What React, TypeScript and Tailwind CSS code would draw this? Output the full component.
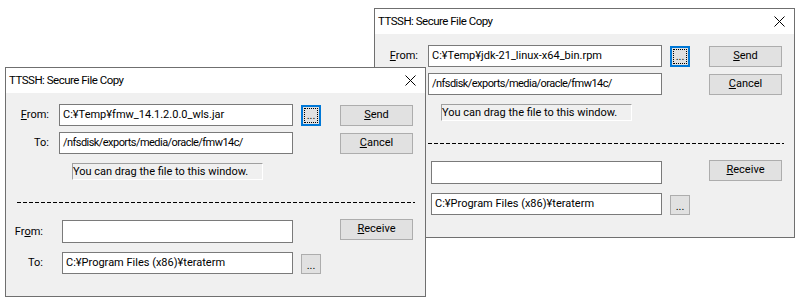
import React from 'react'

interface ScpWindowProps {
  className: string
  sendFrom: string
  sendTo: string
  recvTo: string
}

const Btn = ({ className = '', children }: { className?: string; children: React.ReactNode }) => (
  <div
    className={`flex items-center justify-center border border-[#adadad] bg-[#e1e1e1] text-black ${className}`}
  >
    {children}
  </div>
)

const Field = ({ className = '', value = '' }: { className?: string; value?: string }) => (
  <div
    className={`flex items-center overflow-hidden whitespace-nowrap border border-[#7a7a7a] bg-white pl-[3px] ${className}`}
  >
    {value}
  </div>
)

const Close = () => (
  <svg width="11" height="11" viewBox="0 0 11 11" className="ml-auto mr-[9px]">
    <path d="M0.5 0.5 L10.5 10.5 M10.5 0.5 L0.5 10.5" stroke="#000" strokeWidth="1" />
  </svg>
)

const ScpWindow: React.FC<ScpWindowProps> = ({ className, sendFrom, sendTo, recvTo }) => {
  return (
    <div
      className={`absolute flex h-[230px] w-[421px] flex-col border border-[#6f6f6f] bg-[#f0f0f0] text-[11px] text-black ${className}`}
    >
      {/* title bar */}
      <div className="flex h-[25px] items-center bg-white pl-[3px]">
        <span className="text-[11.5px] tracking-[-0.5px]">TTSSH: Secure File Copy</span>
        <Close />
      </div>

      <div className="flex flex-col pt-[11px]">
        {/* send: from */}
        <div className="flex items-start">
          <div className="w-[43px] text-right leading-[22px]">
            <u>F</u>rom:
          </div>
          <Field className="ml-[10px] h-[22px] w-[234px]" value={sendFrom} />
          <div className="ml-[8px] mt-[1px] h-[21px] w-[20px] border-2 border-[#0078d7] bg-[#e1e1e1] p-px">
            <div className="flex h-full w-full items-end justify-center border border-dotted border-black text-[11px] leading-[13px]">
              ...
            </div>
          </div>
          <Btn className="ml-[19px] mt-[1px] h-[21px] w-[73px]">
            <span>
              <u>S</u>end
            </span>
          </Btn>
        </div>

        {/* send: to */}
        <div className="mt-[6px] flex items-start">
          <div className="w-[43px] text-right leading-[22px]">To:</div>
          <Field className="ml-[10px] h-[22px] w-[234px] tracking-[-0.55px]" value={sendTo} />
          <Btn className="ml-[47px] mt-[1px] h-[21px] w-[73px]">
            <span>
              <u>C</u>ancel
            </span>
          </Btn>
        </div>

        {/* drop hint */}
        <div className="ml-[66px] mt-[9px] h-[17px] w-[191px] whitespace-nowrap border-b border-l border-r border-t border-b-white border-l-[#a0a0a0] border-r-white border-t-[#a0a0a0] leading-[15px]">
          You can drag the file to this window.
        </div>

        <div className="ml-[11px] mt-[22px] h-px w-[398px] bg-[repeating-linear-gradient(90deg,#000_0_4px,transparent_4px_6px)]" />

        {/* receive: from */}
        <div className="mt-[16px] flex items-start">
          <div className="w-[37px] text-right leading-[25px]">
            Fr<u>o</u>m:
          </div>
          <Field className="ml-[19px] mt-px h-[23px] w-[231px]" />
          <Btn className="ml-[47px] h-[21px] w-[73px]">
            <span>
              <u>R</u>eceive
            </span>
          </Btn>
        </div>

        {/* receive: to */}
        <div className="mt-[8px] flex items-start">
          <div className="w-[37px] text-right leading-[22px]">To:</div>
          <Field className="ml-[19px] h-[22px] w-[231px]" value={recvTo} />
          <Btn className="ml-[8px] mt-[2px] h-[20px] w-[20px] items-end text-[11px] leading-[14px]">...</Btn>
        </div>
      </div>
    </div>
  )
}

export default function App() {
  return (
    <div className="relative h-[300px] w-[800px] overflow-hidden bg-white font-['Roboto',sans-serif]">
      <ScpWindow
        className="left-[374px] top-[8px]"
        sendFrom="C:¥Temp¥jdk-21_linux-x64_bin.rpm"
        sendTo="/nfsdisk/exports/media/oracle/fmw14c/"
        recvTo="C:¥Program Files (x86)¥teraterm"
      />
      <ScpWindow
        className="left-[5px] top-[67px]"
        sendFrom="C:¥Temp¥fmw_14.1.2.0.0_wls.jar"
        sendTo="/nfsdisk/exports/media/oracle/fmw14c/"
        recvTo="C:¥Program Files (x86)¥teraterm"
      />
    </div>
  )
}
